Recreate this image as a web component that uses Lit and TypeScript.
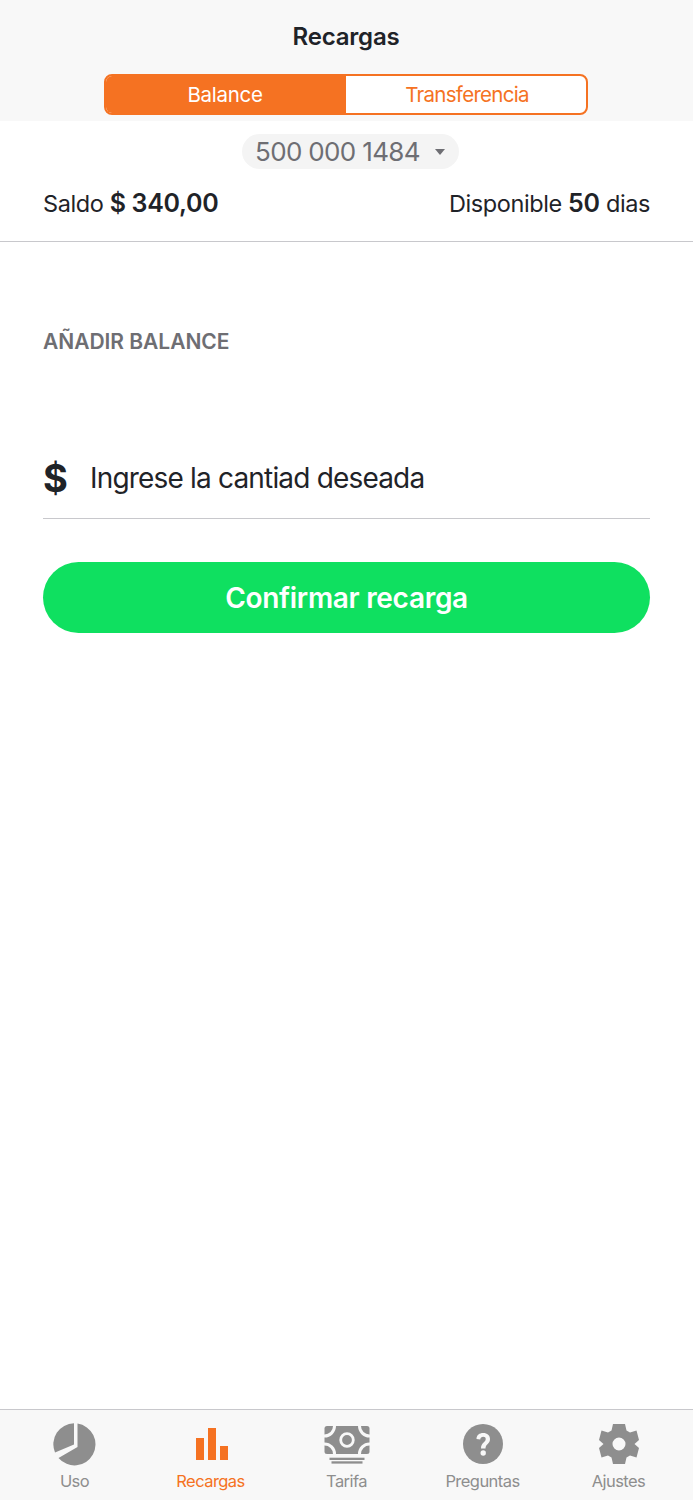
import { LitElement, html, css } from "lit";
import { customElement } from "lit/decorators.js";

const icons = {
  uso: html`<svg viewBox="1 0 44 44" width="44" height="44"><path d="M22 0.300V21.500L3 29.500A21 21 0 0 1 22 0.300Z" fill="currentColor"/><path d="M25.500 0.600A21 21 0 1 1 6.500 35L25.500 24Z" fill="currentColor"/></svg>`,
  rec: html`<svg viewBox="0 0 44 44" width="44" height="44"><rect x="7" y="15" width="8" height="22" fill="currentColor"/><rect x="19" y="5" width="8" height="32" fill="currentColor"/><rect x="31" y="23" width="8" height="14" fill="currentColor"/></svg>`,
  tar: html`<svg viewBox="0 0 46 44" width="46" height="44">
    <rect x="0.500" y="3" width="45" height="28" rx="2.500" fill="currentColor"/>
    <g fill="none" stroke="#f8f8f8" stroke-width="3">
      <circle cx="0.500" cy="3" r="10"/><circle cx="45.500" cy="3" r="10"/>
      <circle cx="0.500" cy="31" r="10"/><circle cx="45.500" cy="31" r="10"/>
      <circle cx="23" cy="17" r="6.300" stroke-width="2.800"/>
    </g>
    <rect x="0" y="31" width="46" height="13" fill="#f8f8f8"/>
    <rect x="5.500" y="34.700" width="35" height="2.300" fill="currentColor"/>
    <rect x="7.500" y="38.300" width="31" height="2.300" fill="currentColor"/>
  </svg>`,
  pre: html`<svg viewBox="0 0 44 44" width="44" height="44"><circle cx="22" cy="21" r="20" fill="currentColor"/><path d="M15.500 16C15.500 12 18.500 10 22.200 10C26.300 10 29 12.500 29 16C29 21 24.500 21 24.500 25.500H20C20 19.500 24.700 19.500 24.700 16C24.700 14.500 23.800 13.700 22.200 13.700C20.500 13.700 19.500 14.700 19.200 16.500Z" fill="#f8f8f8"/><circle cx="22.200" cy="30" r="2.700" fill="#f8f8f8"/></svg>`,
  aju: html`<svg viewBox="0 0 44 44" width="44" height="44"><path fill-rule="evenodd" fill="currentColor" d="M16 1H28L29.500 7.500L33 9.500L39.500 7.500L42 17L37.500 21L42 25L39.500 34.500L33 32.500L29.500 34.500L28 41H16L14.500 34.500L11 32.500L4.500 34.500L2 25L6.500 21L2 17L4.500 7.500L11 9.500L14.500 7.500ZM22 14.500A6.500 6.500 0 1 0 22 27.500A6.500 6.500 0 1 0 22 14.500Z"/></svg>`,
};

@customElement("app-root")
export class AppRoot extends LitElement {
  static styles = css`
    :host { display: flex; flex-direction: column; height: 1500px; background: #fff; color: #1f2328; font-family: Inter, "Liberation Sans", sans-serif; }
    .head { background: #f8f8f8; height: 121px; display: flex; flex-direction: column; align-items: center; box-sizing: border-box; padding-top: 23px; }
    .title { font-size: 24px; font-weight: 600; line-height: 28px; letter-spacing: -0.2px; margin-right: 1px; }
    .seg { display: flex; width: 484px; height: 41px; margin: 23px 1px 0 0; box-sizing: border-box; border: 2px solid #f57222; border-radius: 8px; overflow: hidden; background: #fff; }
    .seg div { display: flex; align-items: center; justify-content: center; font-size: 20.500px; }
    .seg .on { width: 240px; padding-right: 2px; box-sizing: border-box; background: #f57222; color: #fff; letter-spacing: -0.3px; }
    .seg .off { flex: 1; padding-left: 2px; color: #f57222; letter-spacing: -0.7px; }
    .pick { align-self: center; margin: 13px 0 0 8px; width: 217px; height: 35px; box-sizing: border-box; padding-left: 13px; border-radius: 18px; background: #f4f4f4; display: flex; align-items: center; color: #6e6e73; font-size: 26px; letter-spacing: -0.65px; }
    .caret { width: 0; height: 0; margin-left: 15px; border: 5.500px solid transparent; border-top: 6px solid #6e6e73; border-bottom: 0; }
    .stats { display: flex; justify-content: space-between; padding: 17px 43px 0; height: 73px; box-sizing: border-box; line-height: 34px; font-size: 23.500px; letter-spacing: -0.4px; border-bottom: 1px solid #c8c8cc; }
    .stats b { font-weight: 600; font-size: 25px; letter-spacing: -0.3px; }
    .main { flex: 1; padding: 0 43px; }
    .label { margin-top: 86px; color: #6e6e73; font-size: 21px; font-weight: 600; line-height: 28px; letter-spacing: -0.03px; }
    .field { margin-top: 100px; height: 63px; box-sizing: border-box; display: flex; align-items: flex-start; border-bottom: 1px solid #c8c8cc; }
    .dollar { width: 47px; font-size: 38px; font-weight: 700; line-height: 44px; }
    .ph { font-size: 28px; line-height: 44px; letter-spacing: -0.82px; }
    .cta { margin-top: 43px; height: 71px; border-radius: 36px; background: #0fe060; color: #fff; display: flex; align-items: center; justify-content: center; font-size: 28px; font-weight: 600; letter-spacing: -0.3px; }
    nav { height: 91px; box-sizing: border-box; border-top: 1px solid #c8c8cc; background: #f8f8f8; display: grid; grid-template-columns: repeat(5, 136px); justify-content: center; }
    .tab { display: flex; flex-direction: column; align-items: center; color: #8e8e8e; font-size: 16.500px; padding-top: 13px; letter-spacing: -0.55px; }
    .tab svg { display: block; height: 44px; }
    .tab span { margin-top: 3px; line-height: 22px; }
    .tab.on { color: #f57222; }
  `;
  render() {
    const tabs: [string, unknown, boolean][] = [
      ["Uso", icons.uso, false], ["Recargas", icons.rec, true], ["Tarifa", icons.tar, false],
      ["Preguntas", icons.pre, false], ["Ajustes", icons.aju, false],
    ];
    return html`
      <div class="head">
        <div class="title">Recargas</div>
        <div class="seg"><div class="on">Balance</div><div class="off">Transferencia</div></div>
      </div>
      <div class="pick">500 000 1484<i class="caret"></i></div>
      <div class="stats">
        <div>Saldo <b>$ 340,00</b></div>
        <div>Disponible <b>50</b> dias</div>
      </div>
      <div class="main">
        <div class="label">AÑADIR BALANCE</div>
        <div class="field"><div class="dollar">$</div><div class="ph">Ingrese la cantiad deseada</div></div>
        <div class="cta">Confirmar recarga</div>
      </div>
      <nav>${tabs.map(([t, i, on]) => html`<div class="tab ${on ? "on" : ""}">${i}<span>${t}</span></div>`)}</nav>
    `;
  }
}
